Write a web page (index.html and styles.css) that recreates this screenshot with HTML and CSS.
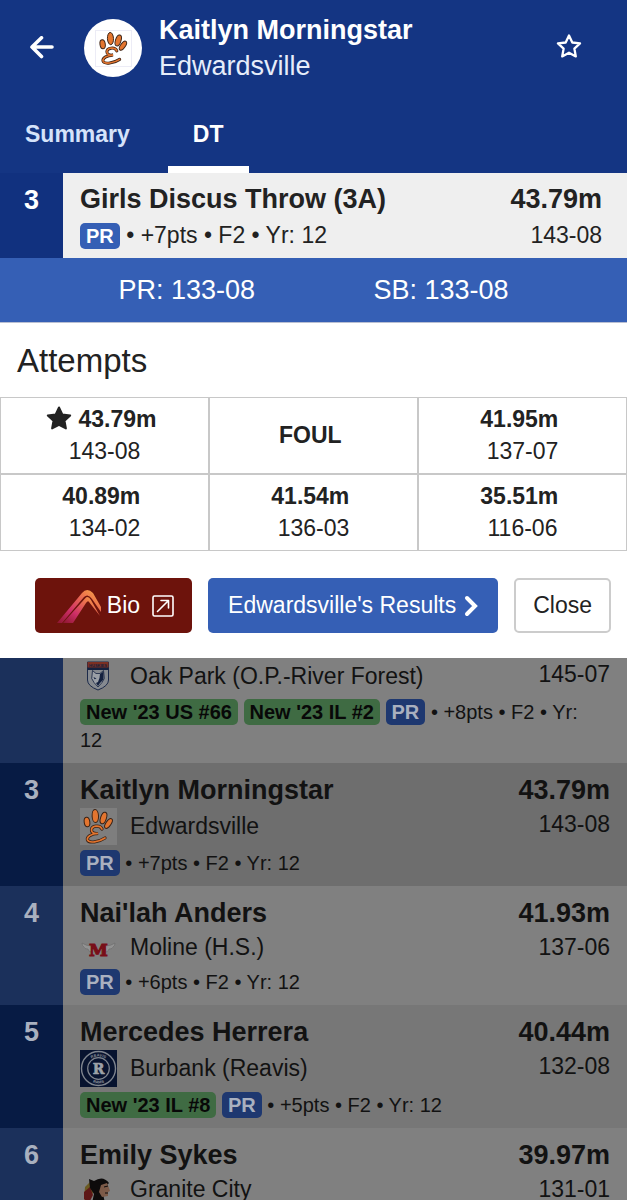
FILE: index.html
```html
<!DOCTYPE html>
<html lang="en">
<head>
<meta charset="utf-8">
<meta name="viewport" content="width=device-width, initial-scale=1">
<title>Kaitlyn Morningstar</title>
<link rel="stylesheet" href="styles.css">
</head>
<body>
<svg class="defs" aria-hidden="true">
  <symbol id="paw" viewBox="0 0 37 37">
    <g fill="#e3752f" stroke="#3a2113" stroke-width="1">
      <ellipse cx="7" cy="14" rx="2.800" ry="4.800" transform="rotate(-8 7 14)"/>
      <ellipse cx="15.300" cy="8" rx="3.200" ry="6.500" transform="rotate(-3 15.300 8)"/>
      <ellipse cx="23.500" cy="10" rx="2.900" ry="6" transform="rotate(18 23.500 10)"/>
      <ellipse cx="28.500" cy="15.500" rx="2.500" ry="5.600" transform="rotate(35 28.500 15.500)"/>
    </g>
    <g fill="none" stroke-linecap="round">
      <path stroke="#3a2113" stroke-width="3.200" d="M22 21C20 16.500 11.500 17.500 11.500 22C11.500 25 14.500 26 18 25.500C11 25.500 6.500 29 7.500 32C9 35.500 19 34 25 30"/>
      <path stroke="#e3752f" stroke-width="1.700" d="M22 21C20 16.500 11.500 17.500 11.500 22C11.500 25 14.500 26 18 25.500C11 25.500 6.500 29 7.500 32C9 35.500 19 34 25 30"/>
    </g>
  </symbol>
</svg>

<div class="page">
  <section class="athlete" aria-label="Athlete details">
    <header class="header">
      <div class="header-top">
        <button class="icon-button" type="button" aria-label="Back">
          <svg width="24" height="24" viewBox="0 0 24 24" fill="none" stroke="#fff" stroke-width="3.600" stroke-linecap="round" stroke-linejoin="round"><path d="M22 11H2.500M11.500 1.800L2 11l9.500 9.500"/></svg>
        </button>
        <div class="avatar"><svg class="avatar-logo" width="37" height="37"><use href="#paw"/></svg></div>
        <div class="who">
          <h1 class="who-name">Kaitlyn Morningstar</h1>
          <p class="who-team">Edwardsville</p>
        </div>
        <button class="icon-button" type="button" aria-label="Favorite">
          <svg width="26" height="28" viewBox="0 0 26 28" fill="none" stroke="#fff" stroke-width="2.300" stroke-linejoin="round"><path d="M13 1.500l3.300 7 7.700.9-5.600 5.300 1.400 7.700L13 18.700l-6.800 3.700 1.400-7.700L2 9.400l7.700-.9z"/></svg>
        </button>
      </div>
      <nav class="tabs">
        <a class="tab" href="#summary">Summary</a>
        <a class="tab tab-active" href="#dt" aria-current="page">DT</a>
      </nav>
    </header>

    <div class="event">
      <div class="rank rank-dark">3</div>
      <div class="event-info">
        <div>
          <h2 class="event-name">Girls Discus Throw (3A)</h2>
          <p class="event-meta"><span class="badge badge-pr">PR</span> • +7pts • F2 • Yr: 12</p>
        </div>
        <div class="event-result">
          <strong class="event-name">43.79m</strong>
          <p class="event-meta">143-08</p>
        </div>
      </div>
    </div>

    <div class="bests"><span>PR: 133-08</span><span>SB: 133-08</span></div>

    <h2 class="attempts-title" id="attempts">Attempts</h2>
    <table class="attempts" aria-labelledby="attempts">
      <tbody>
        <tr>
          <td><svg class="best-star" width="26" height="24" viewBox="0 0 26 24" aria-label="Best"><path fill="#222" stroke="#222" stroke-width="2" stroke-linejoin="round" d="M13 1.500l3.300 6.900 7.900 1-5.700 5.300 1.400 7.700L13 18.800l-6.900 3.600 1.400-7.700L1.800 9.400l7.900-1z"/></svg> <b>43.79m</b>&nbsp;<br>143-08</td>
          <td><b>FOUL</b>&nbsp;</td>
          <td><b>41.95m</b>&nbsp;<br>137-07</td>
        </tr>
        <tr>
          <td><b>40.89m</b>&nbsp;<br>134-02</td>
          <td><b>41.54m</b>&nbsp;<br>136-03</td>
          <td><b>35.51m</b>&nbsp;<br>116-06</td>
        </tr>
      </tbody>
    </table>

    <div class="actions">
      <a class="button button-bio" href="#bio">
        <svg width="44" height="36" viewBox="0 0 44 36" aria-hidden="true">
          <defs><linearGradient id="flame" x1="0" y1="1" x2="1" y2="0"><stop offset="0" stop-color="#8c1630"/><stop offset=".35" stop-color="#cf2f68"/><stop offset=".75" stop-color="#ef7a4a"/><stop offset="1" stop-color="#f6b04a"/></linearGradient></defs>
          <path fill="url(#flame)" d="M0 35L25 5Q30-1 36 5L44 19V24L35 11Q31 5 27 9L5 35Z"/>
          <path fill="url(#flame)" d="M6 35L28 10.500Q31 7 34 12L43 28 32 14Q31 12 29 15L16 35Z"/>
        </svg>
        <span>Bio</span>
        <svg class="open-icon" width="22" height="22" viewBox="0 0 22 22" fill="none" stroke="#fff" stroke-width="1.600" stroke-linecap="round" stroke-linejoin="round" aria-hidden="true"><rect x="1" y="1" width="20" height="20" rx="1.500"/><path d="M5.500 16.500L16.500 5.500M9 5.500h7.500V13"/></svg>
      </a>
      <a class="button button-team" href="#results">Edwardsville's Results
        <svg width="14" height="22" viewBox="0 0 14 22" fill="none" stroke="#fff" stroke-width="4" stroke-linecap="round" aria-hidden="true"><path d="M3 3l8 8-8 8"/></svg>
      </a>
      <button class="button button-close" type="button">Close</button>
    </div>
  </section>

  <main class="results">
    <article class="row row-partial">
      <div class="rank"></div>
      <div class="row-body">
        <div class="row-main">
          <p class="team">
            <svg class="team-logo" width="37" height="30" viewBox="0 0 37 30" aria-hidden="true">
              <path fill="#868a90" stroke="#1c2a4a" stroke-width="1" d="M7.500 1h21v18q0 6-10.500 10Q7.500 25 7.500 19Z"/>
              <path fill="#14213f" d="M7.500 1h21v8h-21z"/><path fill="#7b2f22" d="M7.500 1h21v5.500h-21z"/>
              <text x="18" y="6" text-anchor="middle" font-family="Liberation Sans, sans-serif" font-weight="700" font-size="4" fill="#14213f">HUSKIES</text>
              <path fill="#9a9fa6" stroke="#14213f" stroke-width=".8" d="M12.500 9.500l3.500 3h4l3.500-3 .8 8-2.300 4-4 4.500-4-4.500-2.300-4z"/>
              <path fill="#14213f" d="M20 13l3.500-2.500v8L20 22l-2 3-2-3 2-1 1.500-4zM13.500 16l3 1.500-2 .8z"/>
            </svg>
            <span>Oak Park (O.P.-River Forest)</span>
          </p>
          <div class="row-result"><p class="row-imperial">145-07</p></div>
        </div>
        <p class="row-meta"><span class="badge badge-new">New '23 US #66</span> <span class="badge badge-new">New '23 IL #2</span> <span class="badge badge-pr">PR</span> • +8pts • F2 • Yr: 12</p>
      </div>
    </article>

    <article class="row row-current">
      <div class="rank rank-dark">3</div>
      <div class="row-body">
        <div class="row-main">
          <div>
            <h3 class="row-name">Kaitlyn Morningstar</h3>
            <p class="team"><svg class="team-logo team-logo-tile" width="37" height="37" aria-hidden="true"><use href="#paw"/></svg><span>Edwardsville</span></p>
          </div>
          <div class="row-result"><strong class="row-name">43.79m</strong><p class="row-imperial">143-08</p></div>
        </div>
        <p class="row-meta"><span class="badge badge-pr">PR</span> • +7pts • F2 • Yr: 12</p>
      </div>
    </article>

    <article class="row">
      <div class="rank">4</div>
      <div class="row-body">
        <div class="row-main">
          <div>
            <h3 class="row-name">Nai'lah Anders</h3>
            <p class="team">
              <svg class="team-logo" width="37" height="30" viewBox="0 0 37 30" aria-hidden="true">
                <path fill="#929292" stroke="#6a6a6a" stroke-width=".6" d="M2 10q4 3 10 3l-1 6q-3-1-3-3-4 0-4-2-2-1-2-4zM35 10q-4 3-10 3l1 6q3-1 3-3 4 0 4-2 2-1 2-4z"/>
                <text x="18.500" y="23" text-anchor="middle" font-family="DejaVu Serif, serif" font-weight="700" font-size="17" fill="#780e18" stroke="#780e18" stroke-width="1">M</text>
              </svg>
              <span>Moline (H.S.)</span>
            </p>
          </div>
          <div class="row-result"><strong class="row-name">41.93m</strong><p class="row-imperial">137-06</p></div>
        </div>
        <p class="row-meta"><span class="badge badge-pr">PR</span> • +6pts • F2 • Yr: 12</p>
      </div>
    </article>

    <article class="row row-shaded">
      <div class="rank rank-dark">5</div>
      <div class="row-body">
        <div class="row-main">
          <div>
            <h3 class="row-name">Mercedes Herrera</h3>
            <p class="team">
              <svg class="team-logo" width="37" height="37" viewBox="0 0 37 37" aria-hidden="true">
                <path fill="#07132f" d="M0 0h37v37H0z"/>
                <g fill="none" stroke="#7f858f"><circle cx="18.500" cy="18.500" r="17" stroke-width="1.400"/><circle cx="18.500" cy="18.500" r="10.800" stroke-width="1.200"/></g>
                <path id="ring-top" fill="none" d="M6.500 18.500a12 12 0 0 1 24 0"/>
                <path id="ring-bottom" fill="none" d="M3.500 18.500a15 15 0 0 0 30 0"/>
                <g font-family="Liberation Sans, sans-serif" font-weight="700" font-size="4" fill="#8d929b" text-anchor="middle">
                  <text><textPath href="#ring-top" startOffset="50%">REAVIS</textPath></text>
                  <text><textPath href="#ring-bottom" startOffset="50%">RAMS</textPath></text>
                </g>
                <text x="18.500" y="23.500" text-anchor="middle" font-family="DejaVu Serif, serif" font-weight="700" font-size="14" fill="#9da1a8" stroke="#9da1a8" stroke-width=".6">R</text>
              </svg>
              <span>Burbank (Reavis)</span>
            </p>
          </div>
          <div class="row-result"><strong class="row-name">40.44m</strong><p class="row-imperial">132-08</p></div>
        </div>
        <p class="row-meta"><span class="badge badge-new">New '23 IL #8</span> <span class="badge badge-pr">PR</span> • +5pts • F2 • Yr: 12</p>
      </div>
    </article>

    <article class="row">
      <div class="rank">6</div>
      <div class="row-body">
        <div class="row-main">
          <div>
            <h3 class="row-name">Emily Sykes</h3>
            <p class="team">
              <svg class="team-logo" width="37" height="30" viewBox="0 0 37 30" aria-hidden="true">
                <path fill="#6b5a22" d="M5 12l6-6 3 9-5 12-5-3z"/>
                <path fill="#5d1717" d="M4 17l6-5 3 8-4 8-5-4z"/>
                <path fill="#0d0b0b" d="M9 4l5 2q9-6 15 2l-3 3-3 8 2 9H12l2-9-4-6z"/>
                <path fill="#7c5a48" d="M21 10l6-2 2 5 1 3-2 1v4l-6 1-3-5z"/>
                <path stroke="#0d0b0b" d="M24 12l4-1M25 18h3"/>
              </svg>
              <span>Granite City</span>
            </p>
          </div>
          <div class="row-result"><strong class="row-name">39.97m</strong><p class="row-imperial">131-01</p></div>
        </div>
      </div>
    </article>
  </main>
</div>
</body>
</html>
```
FILE: styles.css
```css
* { box-sizing: border-box; }

body {
  margin: 0;
  background: #fff;
  color: #222;
  font-family: "Liberation Sans", Arial, sans-serif;
  font-size: 23px;
}

h1, h2, h3, p { margin: 0; }
a { color: inherit; text-decoration: none; }

.defs { display: none; }

.page {
  display: flex;
  flex-direction: column;
  height: 100vh;
  overflow: hidden;
}

.athlete { flex: none; }

.header { background: #143583; color: #fff; }

.header-top {
  display: flex;
  align-items: center;
  padding: 12px 45px 0 30px;
}

.icon-button {
  display: flex;
  padding: 0;
  border: 0;
  background: none;
  cursor: pointer;
}

.avatar {
  display: flex;
  align-items: center;
  justify-content: center;
  width: 58px;
  height: 58px;
  margin: 0 17px 0 30px;
  border-radius: 50%;
  background: #fff;
}

.avatar-logo { border: 1px solid #ececf6; }

.who { flex: 1; line-height: 36px; }
.who-name { font-size: 27px; font-weight: 700; }
.who-team { font-size: 27px; color: #e6edfa; }

.tabs { display: flex; gap: 13px; padding-top: 10px; }

.tab {
  padding: 24px 25px 16px;
  border-bottom: 7px solid transparent;
  color: #d5e3fa;
  font-weight: 700;
  line-height: 32px;
}

.tab-active { border-bottom-color: #fff; color: #fff; }

.rank {
  flex: none;
  width: 63px;
  padding-top: 9px;
  background: #1b305b;
  color: #a9b0bf;
  font-size: 27px;
  font-weight: 700;
  line-height: 36px;
  text-align: center;
}

.rank-dark { background: #071b44; }

.event { display: flex; background: #efefef; }
.event .rank { background: #11317f; color: #fff; }

.event-info {
  display: flex;
  flex: 1;
  justify-content: space-between;
  padding: 8px 25px 5px 17px;
  line-height: 36px;
}

.event-name { display: block; font-size: 27px; font-weight: 700; }
.event-result { text-align: right; }

.badge {
  display: inline-block;
  padding: 0 6px;
  border-radius: 5px;
  font-size: 20px;
  font-weight: 700;
  line-height: 26px;
}

.badge-pr { background: #355fb5; color: #fff; }
.results .badge-pr { background: #1e3870; color: #a9b0bf; }
.badge-new { background: #3f6b43; color: #080808; }

.bests {
  display: flex;
  justify-content: space-evenly;
  padding: 14px 0;
  border-bottom: 1px solid #b9bfd2;
  background: #355fb5;
  color: #fff;
  font-size: 27px;
  line-height: 36px;
}

.attempts-title {
  padding: 18px 17px 16px;
  font-size: 33px;
  font-weight: 400;
  line-height: 40px;
}

.attempts {
  width: 100%;
  border-spacing: 0;
  table-layout: fixed;
  line-height: 32px;
  text-align: center;
}

.attempts td { padding: 5px 0 6px; border: 1px solid #c8c8c8; }
.best-star { vertical-align: -3px; }

.actions {
  display: flex;
  justify-content: flex-end;
  gap: 16px;
  padding: 27px 16px 25px;
}

.button {
  display: flex;
  align-items: center;
  height: 55px;
  padding: 0 17px;
  border: 2px solid transparent;
  border-radius: 5px;
  background: #fff;
  color: #fff;
  font: inherit;
  cursor: pointer;
}

.button-bio { gap: 6px; padding: 0 16px 0 20px; background: #6d130c; }
.open-icon { margin-left: 6px; }
.button-team { gap: 8px; padding: 0 18px; background: #355fb5; }
.button-close { border-color: #ccc; color: #222; }

.results { flex: 1; overflow: hidden; background: #808080; color: #121212; }

.row { display: flex; }
.row-current { background: #6e6e6e; }
.row-shaded { background: #777; }

.row-body { flex: 1; padding: 9px 17px 4px; }
.row-partial .row-body { padding-top: 0; }
.row-main { display: flex; justify-content: space-between; }
.row-name { display: block; font-size: 27px; font-weight: 700; line-height: 36px; }
.row-result { text-align: right; }
.row-imperial { line-height: 32px; }

.team {
  display: flex;
  align-items: center;
  gap: 13px;
  min-height: 33px;
}

.row-partial .team { min-height: 36px; }
.team-logo { flex: none; }
.team-logo-tile { background: #7e7e7e; }

.row-meta { padding: 4px 12px 5px 0; font-size: 20px; line-height: 28px; }
```
